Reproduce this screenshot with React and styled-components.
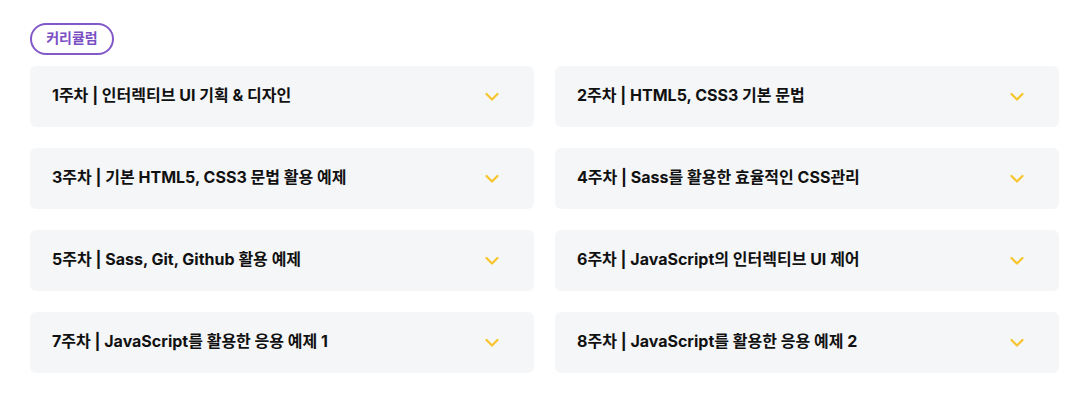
import styled, { createGlobalStyle } from "styled-components";

const weeks = [
    "1주차 | 인터렉티브 UI 기획 & 디자인",
    "2주차 | HTML5, CSS3 기본 문법",
    "3주차 | 기본 HTML5, CSS3 문법 활용 예제",
    "4주차 | Sass를 활용한 효율적인 CSS관리",
    "5주차 | Sass, Git, Github 활용 예제",
    "6주차 | JavaScript의 인터렉티브 UI 제어",
    "7주차 | JavaScript를 활용한 응용 예제 1",
    "8주차 | JavaScript를 활용한 응용 예제 2",
];

export default function App() {
    return (
        <>
            <GlobalStyle />
            <Section>
                <Badge>커리큘럼</Badge>
                <Grid>
                    {weeks.map((title, index) => (
                        <Card key={index}>
                            <Title>{title}</Title>
                            <Chevron viewBox="0 0 14 10">
                                <path d="M1.5 2 L7 7.5 L12.5 2" />
                            </Chevron>
                        </Card>
                    ))}
                </Grid>
            </Section>
        </>
    );
}

const GlobalStyle = createGlobalStyle`
* { box-sizing: border-box; }
body {
    margin: 0;
    background: #fff;
    font-family: Inter, 'Noto Sans CJK KR', sans-serif;
}
`;
const Section = styled.section`
padding: 23px 18px 0 30px;
`;
const Badge = styled.div`
display: inline-flex;
align-items: center;
justify-content: center;
width: 84px;
height: 32px;
border: 2px solid #8259c9;
border-radius: 16px;
color: #7a4fc4;
font-size: 14px;
font-weight: 700;
line-height: 1;
padding-bottom: 2px;
margin-bottom: 11px;
`;
const Grid = styled.div`
display: grid;
grid-template-columns: 504px 504px;
column-gap: 21px;
row-gap: 21px;
`;
const Card = styled.div`
height: 61px;
background: #f5f6f8;
border-radius: 6px;
display: flex;
align-items: center;
justify-content: space-between;
padding: 0 35px 0 22px;
`;
const Title = styled.h3`
margin: 0 0 3px;
font-size: 16px;
font-weight: 700;
line-height: 1;
color: #111;
`;
const Chevron = styled.svg`
width: 14px;
height: 10px;
fill: none;
stroke: #f7c52b;
stroke-width: 2.2;
stroke-linecap: round;
stroke-linejoin: round;
`;
